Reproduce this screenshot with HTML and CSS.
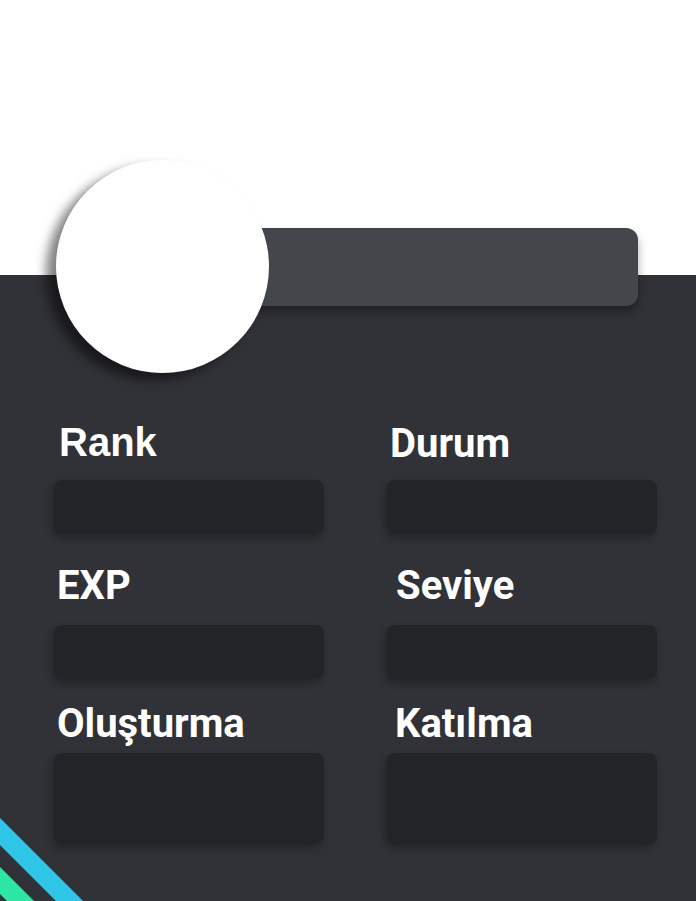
FILE: index.html
```html
<!DOCTYPE html>
<html lang="tr">
<head>
<meta charset="utf-8">
<title>Profil</title>
<link rel="stylesheet" href="styles.css">
</head>
<body>
<div class="page">
  <header class="top">
    <div class="hero">
      <div class="avatar"></div>
      <div class="name-bar"></div>
    </div>
  </header>
  <main class="panel">
    <div class="grid">
      <div class="field row1">
        <div class="label lbl-rank">Rank</div>
        <div class="box"></div>
      </div>
      <div class="field row1 right">
        <div class="label lbl-durum">Durum</div>
        <div class="box"></div>
      </div>
      <div class="field row2">
        <div class="label">EXP</div>
        <div class="box"></div>
      </div>
      <div class="field row2 right">
        <div class="label lbl-seviye">Seviye</div>
        <div class="box"></div>
      </div>
      <div class="field row3">
        <div class="label">Oluşturma</div>
        <div class="box tall"></div>
      </div>
      <div class="field row3 right">
        <div class="label lbl-katilma">Katılma</div>
        <div class="box tall"></div>
      </div>
    </div>
    <svg class="stripes" width="100" height="90" viewBox="0 0 100 90" aria-hidden="true">
      <polygon points="0,7 83,90 56,90 0,34" fill="#2fc6e8"/>
      <polygon points="0,56 34,90 7,90 0,83" fill="#2ee6a3"/>
    </svg>
  </main>
</div>
</body>
</html>
```

FILE: styles.css
```css
* { box-sizing: border-box; }
html, body { margin: 0; height: 100%; }
body {
  font-family: Roboto, "Liberation Sans", Arial, sans-serif;
  background: #313237;
  overflow: hidden;
}
.page {
  display: flex;
  flex-direction: column;
  min-height: 100%;
}
.top {
  background: #ffffff;
  height: 275px;
  padding: 160px 0 0 56px;
}
.hero {
  position: relative;
  z-index: 2;
  display: flex;
  align-items: center;
}
.avatar {
  position: relative;
  z-index: 2;
  width: 213px;
  height: 213px;
  flex: none;
  border-radius: 50%;
  background: #ffffff;
  box-shadow: -10px 7px 11px rgba(0, 0, 0, 0.5);
}
.name-bar {
  width: 429px;
  height: 78px;
  margin-left: -60px;
  border-radius: 12px;
  background: #43464b;
  box-shadow: 0 6px 10px rgba(0, 0, 0, 0.35);
}
.panel {
  position: relative;
  flex: 1;
  background: #313237;
  padding: 147px 39px 0 54px;
}
.grid {
  display: grid;
  grid-template-columns: 270px 270px;
  column-gap: 63px;
}
.field {
  display: flex;
  flex-direction: column;
}
.label {
  color: #ffffff;
  font-weight: 700;
  font-size: 40px;
  line-height: 40px;
  padding-left: 3px;
  white-space: nowrap;
}
.lbl-rank {
  font-family: "Liberation Sans", Arial, sans-serif;
  padding-left: 5px;
}
.lbl-durum {
  padding-left: 3px;
  position: relative;
  top: 2px;
}
.lbl-seviye { padding-left: 9px; }
.lbl-katilma { padding-left: 8px; }
.box {
  height: 54px;
  border-radius: 8px;
  background: #232428;
  box-shadow: -2px 4px 8px rgba(0, 0, 0, 0.3);
}
.box.tall { height: 91px; }
.row1 .label { margin-bottom: 18px; }
.row2 { margin-top: 32px; }
.row2 .label { margin-bottom: 19px; }
.row3 { margin-top: 25px; }
.row3 .label { margin-bottom: 9px; }
.stripes {
  position: absolute;
  left: 0;
  bottom: 0;
  display: block;
}
```
